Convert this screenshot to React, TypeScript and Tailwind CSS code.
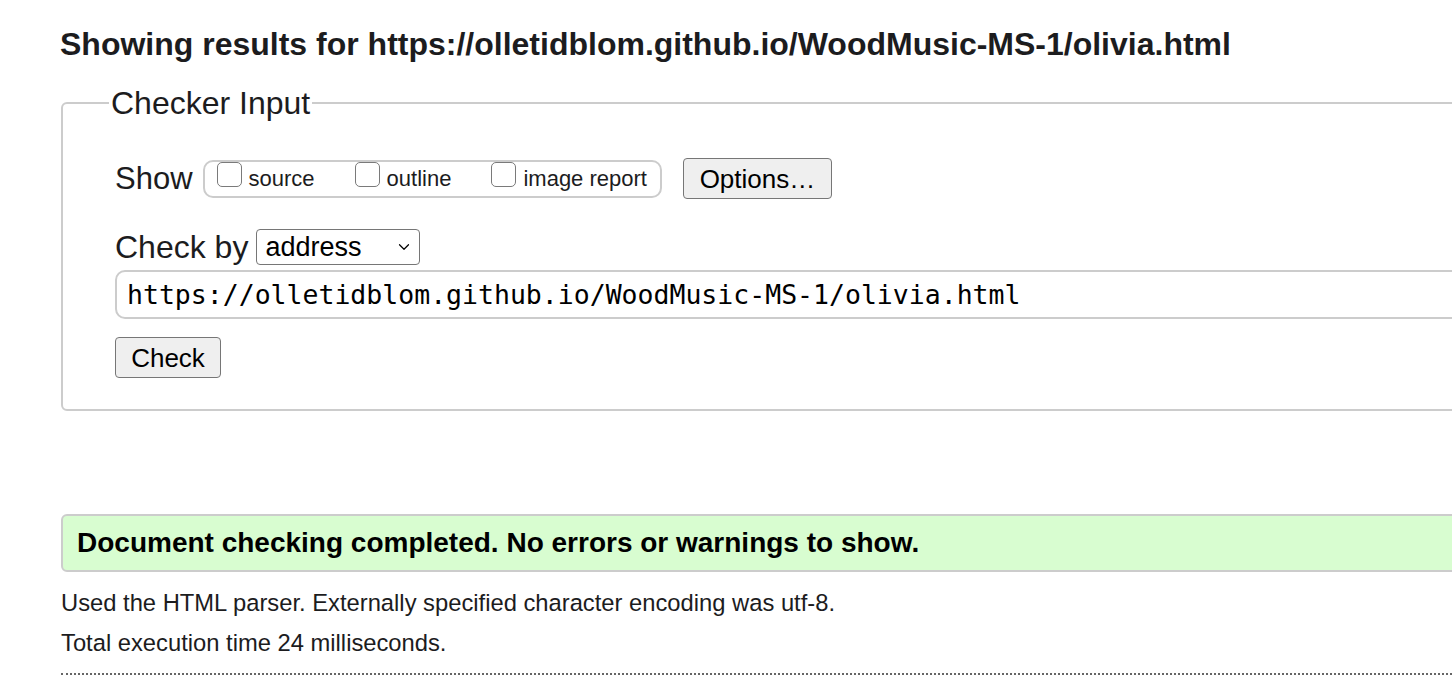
import { ChevronDown } from "lucide-react";

const sans = { fontFamily: '"Liberation Sans", Arial, sans-serif' };

function Box({ label }: { label: string }) {
  return (
    <label className="flex items-start">
      <span className="h-[25px] w-[25px] rounded-[5px] border-[1.5px] border-[#7a7a7a] bg-white" />
      <span className="ml-[7px] mt-[4px] text-[22px] leading-[26px]">{label}</span>
    </label>
  );
}

export default function App() {
  return (
    <div
      className="h-[676px] w-[1452px] overflow-hidden bg-white text-[#1c1c1e]"
      style={sans}
    >
      <div className="w-[1540px] pl-[60px]">
        <h1 className="mt-[24px] text-[32px] font-bold leading-[40px]">
          Showing results for https://olletidblom.github.io/WoodMusic-MS-1/olivia.html
        </h1>

        {/* Checker input */}
        <fieldset className="ml-[1px] mt-[21px] rounded-[6px] border-2 border-[#cccccc] pb-[31px] pl-[52px]">
          <legend className="-ml-[6px] px-[2px] text-[32px] leading-[36px]">Checker Input</legend>

          <div className="mt-[37px] flex h-[41px] items-center">
            <span className="text-[31px] leading-[36px]">Show</span>
            <div className="ml-[10px] flex h-[38px] items-start gap-[40px] rounded-[10px] border-2 border-[#cccccc] pl-[12px] pr-[13px]">
              <Box label="source" />
              <Box label="outline" />
              <Box label="image report" />
            </div>
            <button className="ml-[21px] h-[41px] w-[149px] rounded-[4px] border-[1.5px] border-[#767676] bg-[#efefef] text-[26px] leading-none text-black">
              Options…
            </button>
          </div>

          <div className="mt-[30px] flex h-[36px] items-center">
            <span className="text-[32px] leading-[36px]">Check by</span>
            <div className="ml-[8px] flex h-[36px] w-[164px] items-center justify-between rounded-[4px] border-[1.5px] border-[#767676] pl-[8px] pr-[6px] text-black">
              <span className="text-[27px] leading-none">address</span>
              <ChevronDown className="h-[18px] w-[18px]" strokeWidth={1.6} />
            </div>
          </div>

          <div
            className="mt-[5px] flex h-[49px] items-center rounded-[10px] border-2 border-[#cccccc] pl-[10px] text-[26.5px] text-black"
            style={{ fontFamily: '"DejaVu Sans Mono", "Liberation Mono", monospace' }}
          >
            https://olletidblom.github.io/WoodMusic-MS-1/olivia.html
          </div>

          <button className="mt-[18px] h-[41px] w-[106px] rounded-[4px] border-[1.5px] border-[#767676] bg-[#efefef] text-[26px] leading-none text-black">
            Check
          </button>
        </fieldset>

        {/* Result */}
        <div className="ml-[1px] mt-[103px] flex h-[58px] items-center rounded-[6px] border-2 border-[#cccccc] bg-[#d8fdd0] pl-[14px]">
          <p className="text-[28px] font-bold text-black">
            Document checking completed. No errors or warnings to show.
          </p>
        </div>

        <p className="ml-[1px] mt-[17px] text-[23.75px] leading-[28px]">
          Used the HTML parser. Externally specified character encoding was utf-8.
        </p>
        <p className="ml-[1px] mt-[12px] text-[23.75px] leading-[28px]">
          Total execution time 24 milliseconds.
        </p>
        <div className="ml-[1px] mt-[16px] border-t-2 border-dotted border-[#666666]" />
      </div>
    </div>
  );
}
